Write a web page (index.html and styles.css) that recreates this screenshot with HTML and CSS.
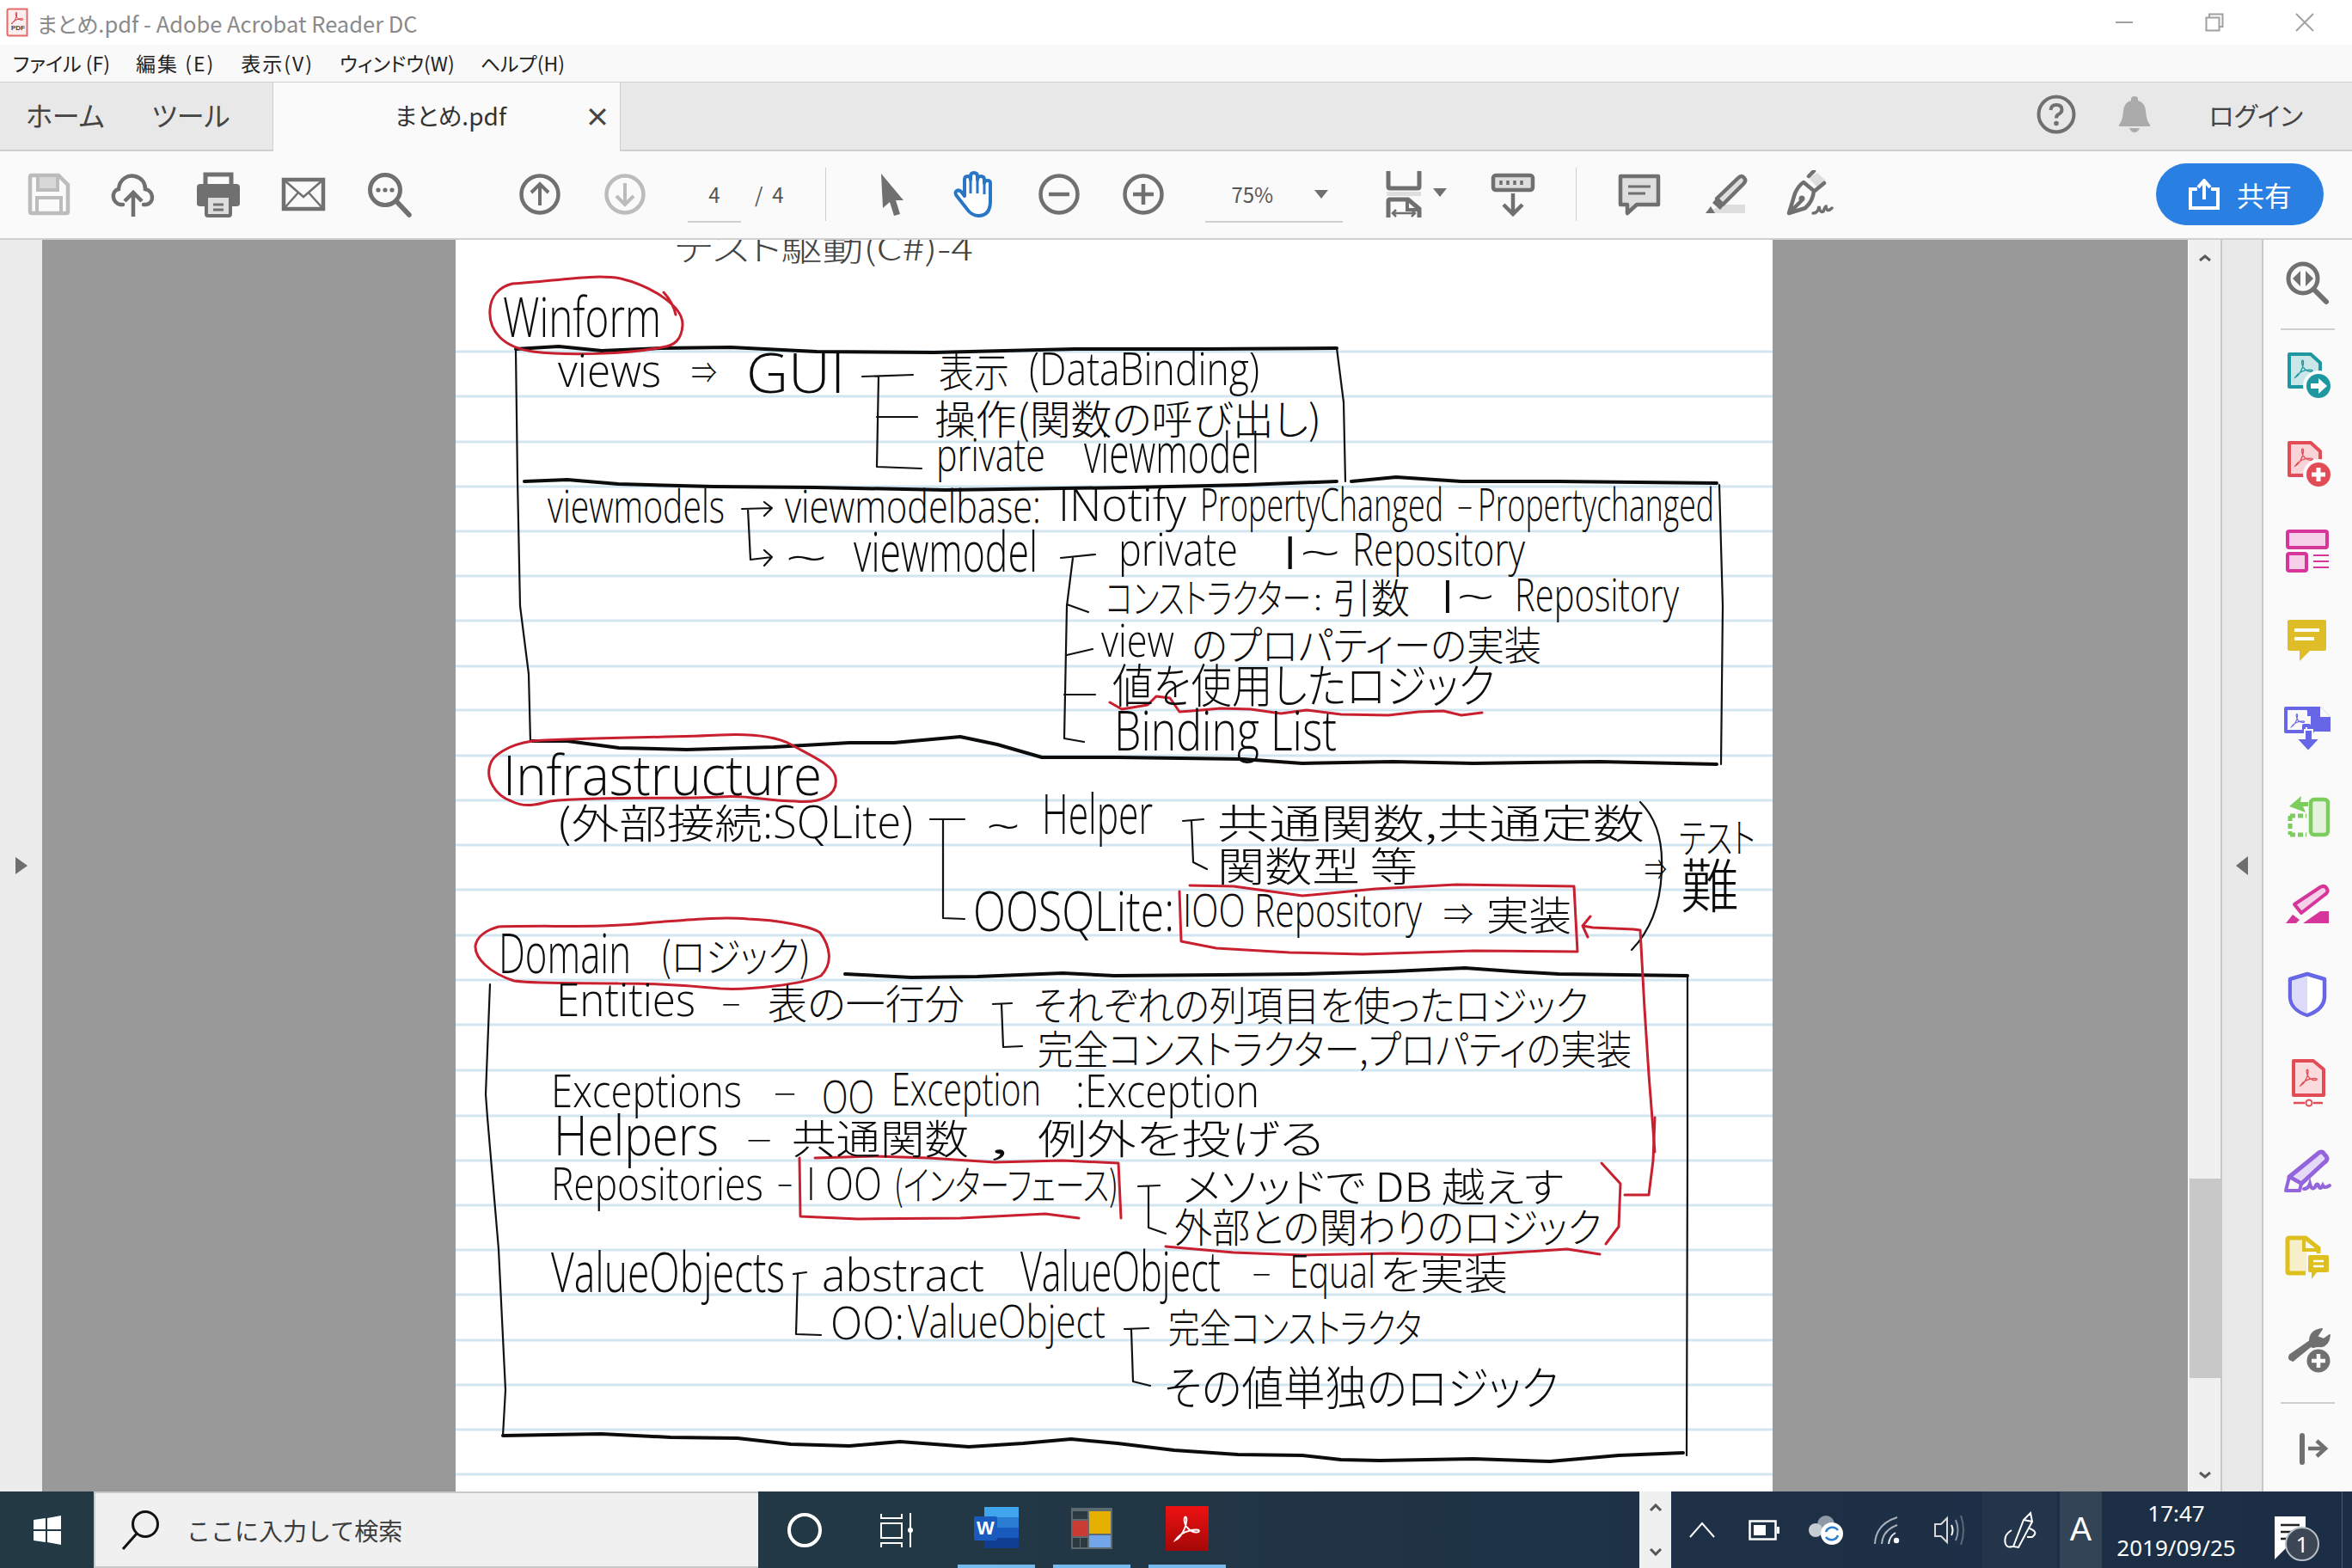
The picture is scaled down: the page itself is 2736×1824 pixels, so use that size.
FILE: index.html
```html
<!DOCTYPE html>
<html lang="ja">
<head>
<meta charset="utf-8">
<title>まとめ.pdf - Adobe Acrobat Reader DC</title>
<link rel="stylesheet" href="styles.css">
</head>
<body>
<svg class="defs" width="0" height="0">
  <symbol id="swirl" viewBox="0 0 24 24"><path d="M3 21C7 19 11 12 11.5 6C11.8 2 9.5 2 9.8 6C10.2 11 15 15 19 15C22 15 22 13 19 13C14 13 7 15 3 21Z" fill="none" stroke="currentColor" stroke-width="1.3"/></symbol>
</svg>
<div class="app">

  <div class="titlebar">
    <svg class="title-logo" width="26" height="34" viewBox="0 0 26 34"><path d="M1.5 3.5Q1.5 1.5 3.5 1.5H24.5V32.5H3.5Q1.5 32.5 1.5 30.5Z" fill="#fbeeee" stroke="#e46a6a" stroke-width="2"/><use href="#swirl" x="4" y="3" width="18" height="18" color="#d8232a"/></svg>
    <span class="title-logo-pdf">PDF</span>
    <span class="title-text">まとめ.pdf - Adobe Acrobat Reader DC</span>
    <div class="win-controls">
      <svg class="win-btn" width="22" height="22" viewBox="0 0 22 22"><path d="M1 11H21" stroke="#a0a0a0" stroke-width="2"/></svg>
      <svg class="win-btn" width="22" height="22" viewBox="0 0 22 22"><path d="M5 5V1.5H20.5V16H16.5M1.5 5.5H16.5V20.5H1.5Z" fill="none" stroke="#a0a0a0" stroke-width="2"/></svg>
      <svg class="win-btn" width="22" height="22" viewBox="0 0 22 22"><path d="M1 1L21 21M21 1L1 21" stroke="#a0a0a0" stroke-width="1.8"/></svg>
    </div>
  </div>

  <div class="menubar">
    <span>ファイル (F)</span><span class="menu-wide">編集 (E)</span><span class="menu-wide">表示(V)</span><span>ウィンドウ(W)</span><span>ヘルプ(H)</span>
  </div>

  <div class="tabbar">
    <div class="tab-home"><span>ホーム</span><span>ツール</span></div>
    <div class="tab-doc"><span class="tab-name">まとめ.pdf</span><span class="tab-close">×</span></div>
    <div class="tab-right">
      <svg width="46" height="46" viewBox="0 0 46 46"><circle cx="23" cy="23" r="20.5" fill="none" stroke="#707070" stroke-width="4"/><path d="M16.5 18Q17 12 23 12Q29.5 12 29.5 17.5Q29.5 21 25.5 23Q23 24.5 23 27.5" fill="none" stroke="#707070" stroke-width="4"/><circle cx="23" cy="33.5" r="2.8" fill="#707070"/></svg>
      <svg class="bell" width="38" height="44" viewBox="0 0 38 44"><path d="M15 4Q15 1 19 1Q23 1 23 4V6Q31 8 32 18Q33 30 37 34V36H1V34Q5 30 6 18Q7 8 15 6Z" fill="#ababab"/><path d="M13 38H25Q23 43 19 43Q15 43 13 38Z" fill="#ababab"/></svg>
      <span class="login">ログイン</span>
    </div>
  </div>

  <div class="toolbar">
    <div class="tool-group tg-file">
      <svg class="ico" width="56" height="56" viewBox="0 0 56 56"><path d="M7 8Q7 6 9 6H40L51 17V48Q51 50 49 50H9Q7 50 7 48Z" fill="none" stroke="#bcbcbc" stroke-width="4.5"/><path d="M16 8V23H39V8" fill="#d8d8d8" stroke="#bcbcbc" stroke-width="4"/><path d="M15 49V32H43V49" fill="none" stroke="#bcbcbc" stroke-width="4"/></svg>
      <svg class="ico" width="56" height="56" viewBox="0 0 56 56"><path d="M16 40H13C3 38 2 24 11 22C12 10 22 5 30 7C38 9 42 15 42 22C52 24 53 38 43 40H40" fill="none" stroke="#707070" stroke-width="4.5" stroke-linecap="round"/><path d="M28 54V27M18 36L28 26L38 36" fill="none" stroke="#707070" stroke-width="4.5"/></svg>
      <svg class="ico ico-print" width="56" height="56" viewBox="0 0 56 56"><path d="M13 16V5H43V16" fill="none" stroke="#707070" stroke-width="5"/><path d="M7 16H49Q53 16 53 20V39Q53 42 49 42H44V29H12V42H7Q3 42 3 39V20Q3 16 7 16Z" fill="#707070"/><path d="M14 30H42V51Q42 53 40 53H16Q14 53 14 51Z" fill="#dedede" stroke="#707070" stroke-width="4"/><path d="M22 40H34M22 46H34" stroke="#707070" stroke-width="3"/></svg>
      <svg class="ico" width="56" height="56" viewBox="0 0 56 56"><path d="M5 11H51V45H5Z" fill="none" stroke="#707070" stroke-width="4.5"/><path d="M5 11L28 31L51 11M5 45L22 26M51 45L34 26" fill="none" stroke="#707070" stroke-width="2.5"/></svg>
      <svg class="ico" width="56" height="56" viewBox="0 0 56 56"><circle cx="24" cy="23" r="17.5" fill="none" stroke="#707070" stroke-width="5"/><circle cx="16" cy="23" r="2.6" fill="#707070"/><circle cx="24" cy="23" r="2.6" fill="#707070"/><circle cx="32" cy="23" r="2.6" fill="#707070"/><path d="M37 36L52 52" stroke="#707070" stroke-width="5.5" stroke-linecap="round"/></svg>
    </div>
    <div class="tool-group tg-nav">
      <svg class="ico" width="56" height="56" viewBox="0 0 56 56"><circle cx="28" cy="28" r="21.5" fill="none" stroke="#707070" stroke-width="4.5"/><path d="M28 41V17M18 26L28 16L38 26" fill="none" stroke="#707070" stroke-width="4"/></svg>
      <svg class="ico" width="56" height="56" viewBox="0 0 56 56"><circle cx="28" cy="28" r="21.5" fill="none" stroke="#bcbcbc" stroke-width="4.5"/><path d="M28 15V39M18 30L28 40L38 30" fill="none" stroke="#bcbcbc" stroke-width="4"/></svg>
    </div>
    <div class="page-field"><span>4</span></div>
    <span class="page-total">/&nbsp;&nbsp;4</span>
    <div class="tool-sep tool-sep-a"></div>
    <div class="tool-group tg-mode">
      <svg class="ico" width="56" height="56" viewBox="0 0 56 56"><path d="M17 4L43 35L34 35L39 51L32 53L27 37L19 44Z" fill="#707070"/></svg>
      <svg class="ico" width="56" height="56" viewBox="0 0 56 56"><path d="M18 44L7 30Q4 26 7 24Q10 22 13 26L16 30V11Q16 7 19.5 7Q23 7 23 11V7Q23 3 27 3Q31 3 31 7V11Q31 7 35 7Q39 7 39 11V15Q39 12 42.5 12Q46 12 46 15V36Q46 53 32 53Q24 53 18 44Z" fill="#fff" stroke="#2a76c6" stroke-width="4" stroke-linejoin="round"/><path d="M23 10V27M31 8V27M39 13V28" stroke="#2a76c6" stroke-width="3"/></svg>
      <svg class="ico" width="56" height="56" viewBox="0 0 56 56"><circle cx="28" cy="28" r="21.5" fill="none" stroke="#707070" stroke-width="4.5"/><path d="M16 28H40" stroke="#707070" stroke-width="4.5"/></svg>
      <svg class="ico" width="56" height="56" viewBox="0 0 56 56"><circle cx="28" cy="28" r="21.5" fill="none" stroke="#707070" stroke-width="4.5"/><path d="M16 28H40M28 16V40" stroke="#707070" stroke-width="4.5"/></svg>
    </div>
    <div class="zoom-field"><span>75%</span><i class="caret"></i></div>
    <svg class="ico ico-fit" width="56" height="56" viewBox="0 0 56 56"><path d="M10 1V19Q10 21 12 21H44Q46 21 46 19V1" fill="none" stroke="#707070" stroke-width="5"/><path d="M8 25H48V30H8Z" fill="#dedede"/><path d="M10 55V36Q10 34 12 34H33L46 45V55" fill="none" stroke="#707070" stroke-width="5"/><path d="M32 34V46H46" fill="none" stroke="#707070" stroke-width="4"/><path d="M15 50H41M19 46L15 50L19 54M37 46L41 50L37 54" fill="none" stroke="#707070" stroke-width="2.5"/></svg>
    <i class="caret caret-fit"></i>
    <svg class="ico ico-read" width="56" height="56" viewBox="0 0 56 56"><rect x="5" y="6" width="46" height="17" rx="3" fill="#dedede" stroke="#707070" stroke-width="4.5"/><path d="M14 12V17M22 12V17M30 12V17M38 12V17" stroke="#707070" stroke-width="3.5"/><path d="M28 27V51M17 40L28 51L39 40" fill="none" stroke="#707070" stroke-width="4.5"/></svg>
    <div class="tool-sep tool-sep-b"></div>
    <div class="tool-group tg-note">
      <svg class="ico" width="56" height="56" viewBox="0 0 56 56"><path d="M6 7H50V40H25L14 50V40H6Z" fill="#dedede" stroke="#707070" stroke-width="4.5" stroke-linejoin="round"/><path d="M15 19H41M15 27H35" stroke="#707070" stroke-width="3"/></svg>
      <svg class="ico" width="56" height="56" viewBox="0 0 56 56"><path d="M8 50H52V40H24Z" fill="#dedede"/><path d="M19 33L44 9Q48 5 51 9Q54 12 50 16L26 40Z" fill="#dedede" stroke="#707070" stroke-width="4.5" stroke-linejoin="round"/><path d="M20 31L28 40L23 46L14 38Z" fill="#707070"/><path d="M6 50L12 42L17 50Z" fill="#707070"/></svg>
      <svg class="ico" width="56" height="56" viewBox="0 0 56 56"><path d="M27 9L36 19L47 12L37 3Z" fill="#dedede"/><path d="M27 7L33 1M21 14L33 24Q32 36 23 44L4 50L11 27Q15 18 21 14ZM34 24L45 15M5 49L18 36" fill="none" stroke="#707070" stroke-width="4.5" stroke-linecap="round" stroke-linejoin="round"/><circle cx="19" cy="33" r="3.5" fill="#707070"/><path d="M32 50Q38 50 39 42Q40 50 44 48Q46 42 47 42Q48 50 54 44" fill="none" stroke="#707070" stroke-width="3.5" stroke-linecap="round"/></svg>
    </div>
    <div class="share-btn">
      <svg width="36" height="36" viewBox="0 0 36 36"><path d="M10 12H2V34H34V12H26" fill="none" stroke="#fff" stroke-width="4"/><path d="M18 24V4M11 10L18 2L25 10" fill="none" stroke="#fff" stroke-width="4"/></svg>
      <span>共有</span>
    </div>
  </div>

  <div class="workspace">
    <div class="left-strip"><i class="tri-right"></i></div>
    <div class="doc-area">
      <svg class="page" width="1532" height="1456" viewBox="530 279 1532 1456">
        <g class="rules">
          <path d="M530 409H2062M530 461H2062M530 514H2062M530 566H2062M530 618H2062M530 670H2062M530 722H2062M530 775H2062M530 826H2062M530 879H2062M530 931H2062M530 983H2062M530 1035H2062M530 1088H2062M530 1140H2062M530 1192H2062M530 1245H2062M530 1298H2062M530 1350H2062M530 1402H2062M530 1454H2062M530 1506H2062M530 1559H2062M530 1611H2062M530 1663H2062M530 1715H2062"/>
        </g>

        <text class="pg-title" x="785" y="303" textLength="347" lengthAdjust="spacingAndGlyphs">テスト駆動(C#)-4</text>

        <g class="thick">
          <path d="M600 406L650 403L700 408L769 405L850 404L950 409L1087 410L1250 406L1400 406L1555 405"/>
          <path d="M610 560L660 558L719 563L830 566L948 567L1100 570L1316 567L1450 564L1555 560"/>
          <path d="M1572 560L1624 555L1700 560L1813 560L1997 562"/>
          <path d="M619 862L660 862L720 870L799 872L900 869L988 864L1040 864L1117 857L1160 866L1212 881L1300 881L1445 883L1515 888L1620 886L1714 888L1860 886L1997 889"/>
          <path d="M983 1133L1060 1137L1137 1136L1236 1132L1296 1135L1420 1134L1515 1133L1620 1130L1704 1126L1760 1130L1813 1133L1963 1135"/>
          <path d="M585 1670L640 1669L699 1668L780 1672L858 1673L920 1680L988 1682L1047 1677L1127 1683L1190 1679L1246 1674L1300 1679L1366 1687L1440 1692L1515 1693L1560 1698L1605 1699L1714 1697L1803 1700L1883 1693L1958 1690"/>
        </g>
        <g class="thin">
          <path d="M600 408L602 558L605 705L615 784L617 863"/>
          <path d="M1555 405L1563 468L1565 560"/>
          <path d="M2000 564L2004 705L2002 889"/>
          <path d="M570 1145L565 1273L567 1300L580 1453L588 1617L585 1670"/>
          <path d="M1963 1135V1340L1962 1693"/>
          <path d="M1003 438L1062 436M1022 438L1020 543L1072 545M1020 485L1067 485"/>
          <path d="M863 592L898 591M889 584L898 591L889 600M870 592L873 651L898 648M889 640L898 648L889 658"/>
          <path d="M1234 649L1274 645M1248 649L1241 705L1238 859L1261 863M1241 703L1266 712M1241 762L1271 755M1238 808L1274 808"/>
          <path d="M1082 953L1122 953M1097 953V1068L1122 1069"/>
          <path d="M1376 955L1400 953M1386 955L1388 1003L1404 1011"/>
          <path d="M1908 933Q1935 960 1933 1010Q1932 1070 1898 1105"/>
          <path d="M1155 1168L1177 1167M1165 1168L1167 1218L1189 1217"/>
          <path d="M1324 1380L1349 1379M1336 1380V1428L1356 1435"/>
          <path d="M923 1482L938 1480M928 1482L926 1552L955 1553"/>
          <path d="M1308 1546L1336 1545M1316 1547L1318 1607L1338 1612"/>
        </g>

        <g class="red">
          <path d="M596 330C640 328 690 318 722 324C755 332 795 355 794 378C793 395 785 402 770 404C730 412 660 414 620 409C585 404 568 385 570 360C571 345 580 334 596 330M772 340Q783 352 786 366"/>
          <path d="M620 862C680 858 780 858 838 855C880 853 905 858 920 866C945 880 970 890 972 905C975 925 955 935 925 932C890 932 870 924 838 927C780 930 700 926 640 932C625 936 610 940 595 932C575 925 565 905 570 890C572 880 590 866 620 862"/>
          <path d="M580 1078C640 1076 700 1080 760 1073C800 1070 840 1066 870 1069C905 1070 945 1078 954 1085C965 1100 970 1120 955 1135C935 1145 870 1152 838 1150C800 1146 750 1144 719 1144C680 1143 630 1145 598 1141C570 1132 552 1115 553 1100C555 1090 565 1082 580 1078"/>
          <path d="M1291 817L1305 825L1335 820L1345 810L1361 812L1372 828L1386 827L1420 824L1455 825L1490 830L1520 826L1560 831L1615 832L1650 828L1679 827L1700 832L1724 829"/>
          <path d="M1384 1030L1435 1031L1515 1042L1600 1034L1694 1029L1831 1031L1835 1107L1715 1106L1585 1110L1500 1108L1415 1103L1374 1095L1372 1037"/>
          <path d="M1925 1300L1923 1350L1918 1390L1890 1390"/>
          <path d="M1841 1077L1853 1079L1900 1081L1908 1082L1913 1173L1918 1250L1925 1340M1841 1077L1850 1066M1841 1077L1847 1090"/>
          <path d="M1863 1353L1885 1377L1883 1427L1868 1447"/>
          <path d="M948 1347L1017 1345L1080 1347L1157 1352L1236 1350L1301 1353L1304 1417M930 1347L931 1415L998 1418L1117 1417L1216 1412L1255 1417"/>
          <path d="M1356 1450L1435 1457L1515 1460L1620 1458L1714 1460L1823 1453L1861 1459"/>
        </g>

        <text class="hw-l" x="585" y="392" textLength="184" lengthAdjust="spacingAndGlyphs">Winform</text>
        <text class="hw-m" x="649" y="450" textLength="120" lengthAdjust="spacingAndGlyphs">views</text>
        <text class="hj-s" x="804" y="446" textLength="30" lengthAdjust="spacingAndGlyphs">⇒</text>
        <text class="hw-l" x="868" y="457" textLength="115" lengthAdjust="spacingAndGlyphs">GUI</text>
        <text class="hj-m" x="1092" y="450" textLength="82" lengthAdjust="spacingAndGlyphs">表示</text>
        <text class="hw-m" x="1197" y="448" textLength="268" lengthAdjust="spacingAndGlyphs">(DataBinding)</text>
        <text class="hj-m" x="1087" y="505" textLength="450" lengthAdjust="spacingAndGlyphs">操作(関数の呼び出し)</text>
        <text class="hw-m" x="1089" y="548" textLength="127" lengthAdjust="spacingAndGlyphs">private</text>
        <text class="hw-l" x="1261" y="550" textLength="204" lengthAdjust="spacingAndGlyphs">viewmodel</text>

        <text class="hw-m" x="637" y="608" textLength="206" lengthAdjust="spacingAndGlyphs">viewmodels</text>
        <text class="hw-m" x="913" y="608" textLength="298" lengthAdjust="spacingAndGlyphs">viewmodelbase:</text>
        <text class="hw-m" x="1231" y="606" textLength="149" lengthAdjust="spacingAndGlyphs">INotify</text>
        <text class="hw-m" x="1396" y="606" textLength="283" lengthAdjust="spacingAndGlyphs">PropertyChanged</text>
        <text class="hj-s" x="1694" y="600" textLength="20" lengthAdjust="spacingAndGlyphs">-</text>
        <text class="hw-m" x="1719" y="606" textLength="275" lengthAdjust="spacingAndGlyphs">Propertychanged</text>
        <text class="hw-m" x="913" y="668" textLength="50" lengthAdjust="spacingAndGlyphs">~</text>
        <text class="hw-l" x="993" y="665" textLength="214" lengthAdjust="spacingAndGlyphs">viewmodel</text>
        <text class="hw-m" x="1301" y="658" textLength="139" lengthAdjust="spacingAndGlyphs">private</text>
        <text class="hw-m" x="1490" y="662" textLength="70" lengthAdjust="spacingAndGlyphs">I~</text>
        <text class="hw-m" x="1573" y="658" textLength="201" lengthAdjust="spacingAndGlyphs">Repository</text>
        <text class="hj-m" x="1286" y="713" textLength="239" lengthAdjust="spacingAndGlyphs">コンストラクター</text>
        <text class="hj-s" x="1528" y="710" textLength="10" lengthAdjust="spacingAndGlyphs">:</text>
        <text class="hj-m" x="1550" y="713" textLength="90" lengthAdjust="spacingAndGlyphs">引数</text>
        <text class="hw-m" x="1674" y="713" textLength="65" lengthAdjust="spacingAndGlyphs">I~</text>
        <text class="hw-m" x="1762" y="711" textLength="191" lengthAdjust="spacingAndGlyphs">Repository</text>
        <text class="hw-m" x="1281" y="764" textLength="85" lengthAdjust="spacingAndGlyphs">view</text>
        <text class="hj-m" x="1386" y="768" textLength="407" lengthAdjust="spacingAndGlyphs">のプロパティーの実装</text>
        <text class="hj-l" x="1294" y="818" textLength="445" lengthAdjust="spacingAndGlyphs">値を使用したロジック</text>
        <text class="hw-l" x="1296" y="873" textLength="259" lengthAdjust="spacingAndGlyphs">Binding List</text>

        <text class="hw-l" x="585" y="925" textLength="371" lengthAdjust="spacingAndGlyphs">Infrastructure</text>
        <text class="hj-m" x="647" y="975" textLength="240" lengthAdjust="spacingAndGlyphs">(外部接続</text>
        <text class="hw-m" x="887" y="975" textLength="175" lengthAdjust="spacingAndGlyphs">:SQLite)</text>
        <text class="hw-m" x="1147" y="980" textLength="40" lengthAdjust="spacingAndGlyphs">~</text>
        <text class="hw-l" x="1212" y="970" textLength="129" lengthAdjust="spacingAndGlyphs">Helper</text>
        <text class="hj-m" x="1416" y="975" textLength="497" lengthAdjust="spacingAndGlyphs">共通関数,共通定数</text>
        <text class="hj-m" x="1416" y="1025" textLength="233" lengthAdjust="spacingAndGlyphs">関数型 等</text>
        <text class="hw-l" x="1132" y="1083" textLength="234" lengthAdjust="spacingAndGlyphs">OOSQLite:</text>
        <text class="hw-m" x="1376" y="1078" textLength="278" lengthAdjust="spacingAndGlyphs">IOO Repository</text>
        <text class="hj-s" x="1679" y="1076" textLength="35" lengthAdjust="spacingAndGlyphs">⇒</text>
        <text class="hj-m" x="1729" y="1082" textLength="99" lengthAdjust="spacingAndGlyphs">実装</text>
        <text class="hj-m" x="1953" y="992" textLength="89" lengthAdjust="spacingAndGlyphs">テスト</text>
        <text class="hj-s" x="1913" y="1024" textLength="26" lengthAdjust="spacingAndGlyphs">⇒</text>
        <text class="hj-t" x="1955" y="1056" textLength="68" lengthAdjust="spacingAndGlyphs">難</text>

        <text class="hw-l" x="580" y="1132" textLength="154" lengthAdjust="spacingAndGlyphs">Domain</text>
        <text class="hj-m" x="768" y="1130" textLength="175" lengthAdjust="spacingAndGlyphs">(ロジック)</text>
        <text class="hw-m" x="647" y="1182" textLength="162" lengthAdjust="spacingAndGlyphs">Entities</text>
        <text class="hj-s" x="838" y="1178" textLength="25" lengthAdjust="spacingAndGlyphs">-</text>
        <text class="hj-m" x="893" y="1185" textLength="229" lengthAdjust="spacingAndGlyphs">表の一行分</text>
        <text class="hj-m" x="1202" y="1187" textLength="646" lengthAdjust="spacingAndGlyphs">それぞれの列項目を使ったロジック</text>
        <text class="hj-m" x="1207" y="1238" textLength="691" lengthAdjust="spacingAndGlyphs">完全コンストラクター,プロパティの実装</text>
        <text class="hw-m" x="641" y="1288" textLength="222" lengthAdjust="spacingAndGlyphs">Exceptions</text>
        <text class="hj-s" x="898" y="1282" textLength="30" lengthAdjust="spacingAndGlyphs">-</text>
        <text class="hw-m" x="956" y="1295" textLength="61" lengthAdjust="spacingAndGlyphs">OO</text>
        <text class="hw-m" x="1037" y="1286" textLength="174" lengthAdjust="spacingAndGlyphs">Exception</text>
        <text class="hw-m" x="1251" y="1288" textLength="214" lengthAdjust="spacingAndGlyphs">:Exception</text>
        <text class="hw-l" x="644" y="1344" textLength="192" lengthAdjust="spacingAndGlyphs">Helpers</text>
        <text class="hj-s" x="866" y="1336" textLength="34" lengthAdjust="spacingAndGlyphs">-</text>
        <text class="hj-m" x="921" y="1342" textLength="206" lengthAdjust="spacingAndGlyphs">共通関数</text>
        <text class="hj-m" x="1150" y="1342" textLength="24" lengthAdjust="spacingAndGlyphs">,</text>
        <text class="hj-m" x="1207" y="1342" textLength="333" lengthAdjust="spacingAndGlyphs">例外を投げる</text>
        <text class="hw-m" x="641" y="1396" textLength="247" lengthAdjust="spacingAndGlyphs">Repositories</text>
        <text class="hj-s" x="903" y="1388" textLength="20" lengthAdjust="spacingAndGlyphs">-</text>
        <text class="hw-m" x="938" y="1396" textLength="88" lengthAdjust="spacingAndGlyphs">I OO</text>
        <text class="hj-m" x="1040" y="1396" textLength="261" lengthAdjust="spacingAndGlyphs">(インターフェース)</text>
        <text class="hj-m" x="1376" y="1398" textLength="443" lengthAdjust="spacingAndGlyphs">メソッドで DB 越えす</text>
        <text class="hj-m" x="1366" y="1445" textLength="497" lengthAdjust="spacingAndGlyphs">外部との関わりのロジック</text>
        <text class="hw-l" x="641" y="1503" textLength="272" lengthAdjust="spacingAndGlyphs">ValueObjects</text>
        <text class="hw-m" x="956" y="1502" textLength="189" lengthAdjust="spacingAndGlyphs">abstract</text>
        <text class="hw-l" x="1187" y="1502" textLength="233" lengthAdjust="spacingAndGlyphs">ValueObject</text>
        <text class="hj-s" x="1455" y="1492" textLength="25" lengthAdjust="spacingAndGlyphs">-</text>
        <text class="hw-m" x="1500" y="1498" textLength="100" lengthAdjust="spacingAndGlyphs">Equal</text>
        <text class="hj-m" x="1605" y="1500" textLength="149" lengthAdjust="spacingAndGlyphs">を実装</text>
        <text class="hw-m" x="966" y="1558" textLength="86" lengthAdjust="spacingAndGlyphs">OO:</text>
        <text class="hw-m" x="1056" y="1556" textLength="230" lengthAdjust="spacingAndGlyphs">ValueObject</text>
        <text class="hj-m" x="1359" y="1562" textLength="295" lengthAdjust="spacingAndGlyphs">完全コンストラクタ</text>
        <text class="hj-l" x="1354" y="1635" textLength="459" lengthAdjust="spacingAndGlyphs">その値単独のロジック</text>
      </svg>
    </div>
    <div class="scroll-strip">
      <svg class="chev" width="16" height="10" viewBox="0 0 16 10"><path d="M2 8L8 3L14 8" fill="none" stroke="#5a5a5a" stroke-width="3"/></svg>
      <div class="scroll-thumb"></div>
      <svg class="chev chev-down" width="16" height="10" viewBox="0 0 16 10"><path d="M2 2L8 7L14 2" fill="none" stroke="#5a5a5a" stroke-width="3"/></svg>
    </div>
    <div class="panel-handle"><i class="tri-left"></i></div>
    <div class="tools">
      <div class="tool-cell"><svg width="60" height="60" viewBox="0 0 60 60"><circle cx="24" cy="23" r="17" fill="none" stroke="#707070" stroke-width="5"/><path d="M21 14V32L12 23ZM27 14V32L36 23Z" fill="#707070"/><path d="M37 36L51 50" stroke="#707070" stroke-width="6" stroke-linecap="round"/></svg></div>
      <div class="tools-sep"></div>
      <div class="tool-cell"><svg width="60" height="60" viewBox="0 0 60 60"><path d="M8 6H33L44 16V44H8Z" fill="#c9e7e8" stroke="#1f97a0" stroke-width="4" stroke-linejoin="round"/><use href="#swirl" x="12" y="10" width="26" height="26" color="#1f97a0"/><circle cx="42" cy="43" r="18" fill="#fafafa"/><circle cx="42" cy="43" r="14" fill="#1f97a0"/><path d="M33 40H42V34L52 43L42 52V46H33Z" fill="#fff"/></svg></div>
      <div class="tool-cell"><svg width="60" height="60" viewBox="0 0 60 60"><path d="M8 6H33L44 16V44H8Z" fill="#f8d3d7" stroke="#e24c56" stroke-width="4" stroke-linejoin="round"/><use href="#swirl" x="12" y="10" width="26" height="26" color="#e24c56"/><circle cx="42" cy="43" r="18" fill="#fafafa"/><circle cx="42" cy="43" r="14" fill="#e24c56"/><path d="M42 35V51M34 43H50" stroke="#fff" stroke-width="5"/></svg></div>
      <div class="tool-cell"><svg width="60" height="60" viewBox="0 0 60 60"><rect x="6" y="6" width="46" height="19" rx="2" fill="#f6cfe8" stroke="#d6359a" stroke-width="4"/><rect x="6" y="32" width="22" height="20" rx="2" fill="#f6cfe8" stroke="#d6359a" stroke-width="4"/><path d="M36 34H54M36 41H54M36 48H54" stroke="#d6359a" stroke-width="2.2"/></svg></div>
      <div class="tool-cell"><svg width="60" height="60" viewBox="0 0 60 60"><path d="M9 6H49Q51 6 51 8V40Q51 42 49 42H32L20 54V42H9Q6 42 6 40V8Q6 6 9 6Z" fill="#dfbd28"/><path d="M14 18H43M14 28H37" stroke="#fff" stroke-width="4"/></svg></div>
      <div class="tool-cell"><svg width="60" height="60" viewBox="0 0 60 60"><path d="M4 6H29L35 12V33H31V26H25V33H4Z" fill="#fafafa" stroke="#6666e6" stroke-width="4" stroke-linejoin="round"/><use href="#swirl" x="8" y="10" width="20" height="20" color="#6666e6"/><path d="M29 4H44L56 16V33H37V15H29Z" fill="#6666e6"/><path d="M44 4V16H56" fill="#fafafa"/><path d="M26 31H35V41H44L30 56L16 41H26Z" fill="#6666e6" stroke="#fafafa" stroke-width="2"/></svg></div>
      <div class="tool-cell"><svg width="60" height="60" viewBox="0 0 60 60"><rect x="33" y="9" width="20" height="41" rx="4" fill="#e5f2dc" stroke="#7dcc5e" stroke-width="4.5"/><path d="M9 28H28M9 50H28M9 28V50" fill="none" stroke="#7dcc5e" stroke-width="5" stroke-dasharray="6 3"/><path d="M8 17L22 5L21 12H30V17H24L27 24Z" fill="#7dcc5e"/></svg></div>
      <div class="tool-cell"><svg width="60" height="60" viewBox="0 0 60 60"><path d="M14 28L44 8Q49 5 52 10Q54 14 49 17L22 38Z" fill="#f6cfe8" stroke="#d6359a" stroke-width="4" stroke-linejoin="round"/><path d="M4 50L12 40L20 46L16 50Z" fill="#d6359a"/><path d="M24 50L44 36H54V50Z" fill="#d6359a"/></svg></div>
      <div class="tool-cell"><svg width="60" height="60" viewBox="0 0 60 60"><path d="M29 6L49 12V32Q49 47 29 54Q9 47 9 32V12Z" fill="#fff" stroke="#6666e6" stroke-width="4.5" stroke-linejoin="round"/><path d="M29 9V52Q11 46 11 32V14Z" fill="#dcdcf8"/></svg></div>
      <div class="tool-cell"><svg width="60" height="60" viewBox="0 0 60 60"><path d="M13 4H36L48 14V44H13Z" fill="#fadadc" stroke="#e24c56" stroke-width="4" stroke-linejoin="round"/><use href="#swirl" x="18" y="11" width="25" height="25" color="#e24c56"/><path d="M13 53H26M36 53H47" stroke="#e24c56" stroke-width="2.5"/><circle cx="31" cy="53" r="3.5" fill="none" stroke="#e24c56" stroke-width="2"/></svg></div>
      <div class="tool-cell"><svg width="60" height="60" viewBox="0 0 60 60"><path d="M8 36L40 10Q46 4 49 10L51 12Q54 16 48 20L22 44Z" fill="#e4d9f6" stroke="#9464dc" stroke-width="5" stroke-linejoin="round"/><path d="M4 52L8 36L22 44L20 52Z" fill="#fafafa" stroke="#9464dc" stroke-width="4" stroke-linejoin="round"/><path d="M25 50Q30 50 32 44Q34 52 38 48Q40 42 42 46Q44 52 47 46Q49 50 55 46" fill="none" stroke="#9464dc" stroke-width="4" stroke-linecap="round"/></svg></div>
      <div class="tool-cell"><svg width="60" height="60" viewBox="0 0 60 60"><path d="M28 4H8Q6 4 6 6V44H28" fill="#f6efca"/><path d="M27 45H8Q6 45 6 43V6Q6 4 8 4H27L42 16V22" fill="none" stroke="#dfbf1e" stroke-width="5"/><path d="M25 5V18H42" fill="none" stroke="#dfbf1e" stroke-width="4"/><path d="M32 24H52Q54 24 54 26V42Q54 44 52 44H40L34 52V44H32Q30 44 30 42V26Q30 24 32 24Z" fill="#dfbf1e"/><path d="M36 31H48M36 37H48" stroke="#fff" stroke-width="2.5"/></svg></div>
      <div class="tool-cell"><svg width="60" height="60" viewBox="0 0 60 60"><path d="M9 37L32 21Q32 9 46 7L40 16L48 19L55 14Q54 26 44 28Q38 30 33 27L12 44Z" fill="#707070" stroke="#707070" stroke-width="2" stroke-linejoin="round"/><circle cx="11" cy="40" r="4" fill="#707070"/><circle cx="42" cy="44" r="16" fill="#fafafa"/><circle cx="42" cy="44" r="13.5" fill="#707070"/><path d="M42 36V52M34 44H50" stroke="#fff" stroke-width="4.5"/></svg></div>
      <div class="tools-sep tools-sep-low"></div>
      <div class="tool-cell"><svg width="60" height="60" viewBox="0 0 60 60"><path d="M23 15V46" stroke="#707070" stroke-width="6" stroke-linecap="round"/><path d="M30 30H50M40 21L50 30L40 39" fill="none" stroke="#707070" stroke-width="4.5"/></svg></div>
    </div>
  </div>

  <div class="taskbar">
    <div class="start">
      <svg width="34" height="34" viewBox="0 0 34 34"><path d="M1 5L15 3V16H1ZM17 3L33 0V16H17ZM1 18H15V31L1 29ZM17 18H33V34L17 31Z" fill="#fff"/></svg>
    </div>
    <div class="search-box">
      <svg width="50" height="50" viewBox="0 0 50 50"><circle cx="30" cy="18" r="14.5" fill="none" stroke="#111" stroke-width="3"/><path d="M20 29L4 47" stroke="#111" stroke-width="3"/></svg>
      <span>ここに入力して検索</span>
    </div>
    <div class="task-cell">
      <svg width="42" height="42" viewBox="0 0 42 42"><circle cx="21" cy="21" r="18" fill="none" stroke="#fff" stroke-width="4"/></svg>
    </div>
    <div class="task-cell">
      <svg width="44" height="44" viewBox="0 0 44 44"><path d="M4 3V8H28V3M4 14H28V31H4ZM4 42V37H28V42M38 2V42" fill="none" stroke="#fff" stroke-width="2"/><circle cx="38" cy="22" r="3" fill="#fff"/></svg>
    </div>
    <div class="task-app task-app-first">
      <svg width="52" height="50" viewBox="0 0 52 50"><path d="M12 0H52V12H12Z" fill="#41a5ee"/><path d="M12 12H52V24H12Z" fill="#2b7cd3"/><path d="M12 24H52V36H12Z" fill="#185abd"/><path d="M12 36H52V48H12Z" fill="#103f91"/><rect x="0" y="11" width="27" height="28" rx="2" fill="#185abd"/><text class="word-w" x="13.5" y="32" text-anchor="middle">W</text></svg>
    </div>
    <div class="task-app">
      <svg width="48" height="48" viewBox="0 0 48 48"><rect x="0" y="0" width="48" height="48" fill="#5d6a70"/><rect x="21" y="4" width="25" height="26" fill="#e6b000"/><rect x="21" y="32" width="25" height="14" fill="#72a5ea"/><rect x="2" y="15" width="17" height="18" fill="#c93b33"/><rect x="2" y="4" width="17" height="9" fill="#2b3940"/><rect x="2" y="35" width="8" height="11" fill="#2b3940"/><rect x="11" y="35" width="8" height="11" fill="#2b3940"/></svg>
    </div>
    <div class="task-app">
      <svg width="50" height="52" viewBox="0 0 50 52"><defs><linearGradient id="redg" x1="0" y1="0" x2="0" y2="1"><stop offset="0" stop-color="#ee1111"/><stop offset="1" stop-color="#a50808"/></linearGradient></defs><rect width="50" height="52" fill="url(#redg)"/><use href="#swirl" x="7" y="8" width="36" height="36" color="#fff"/></svg>
    </div>
    <div class="tray-scroll">
      <svg width="16" height="10" viewBox="0 0 16 10"><path d="M2 8L8 2L14 8" fill="none" stroke="#555" stroke-width="3"/></svg>
      <svg width="16" height="10" viewBox="0 0 16 10"><path d="M2 2L8 8L14 2" fill="none" stroke="#555" stroke-width="3"/></svg>
    </div>
    <div class="tray-cell"><svg width="30" height="20" viewBox="0 0 30 20"><path d="M1 18L15 2L29 18" fill="none" stroke="#fff" stroke-width="2"/></svg></div>
    <div class="tray-cell"><svg width="36" height="24" viewBox="0 0 36 24"><rect x="1.5" y="1.5" width="30" height="21" fill="none" stroke="#fff" stroke-width="2.5"/><rect x="6" y="6" width="14" height="12" fill="#fff"/><rect x="33" y="8" width="3" height="8" fill="#fff"/></svg></div>
    <div class="tray-cell"><svg width="40" height="36" viewBox="0 0 40 36"><circle cx="20" cy="11" r="10" fill="#8d9aa6"/><circle cx="8" cy="18" r="8" fill="#c5ccd2"/><circle cx="27" cy="22" r="13" fill="#fff"/><path d="M20 20A8 8 0 0 1 34 18M34 24A8 8 0 0 1 20 26" fill="none" stroke="#2a7fd0" stroke-width="2.5"/></svg></div>
    <div class="tray-cell"><svg width="34" height="34" viewBox="0 0 34 34"><path d="M2 33Q3 10 28 2M10 33Q11 17 28 11" fill="none" stroke="#aab2bb" stroke-width="2"/><path d="M18 33Q19 24 26 20" fill="none" stroke="#e8e8e8" stroke-width="2"/><circle cx="27" cy="29" r="3.2" fill="#fff"/></svg></div>
    <div class="tray-cell"><svg width="38" height="36" viewBox="0 0 38 36"><path d="M2 11H9L16 4V32L9 25H2Z" fill="none" stroke="#d8d8d8" stroke-width="2"/><path d="M21 12Q24 18 21 24" fill="none" stroke="#fff" stroke-width="2"/><path d="M26 6Q31 18 26 30" fill="none" stroke="#8a96a2" stroke-width="2"/><path d="M32 1Q38 18 32 35" fill="none" stroke="#5b6978" stroke-width="2"/></svg></div>
    <div class="tray-pen"><svg width="44" height="44" viewBox="0 0 44 44"><path d="M14 41L26 10L34 2L36 12L20 42ZM26 10L36 12M12 22Q2 28 5 38Q7 43 13 41M33 20Q44 24 36 30L30 30" fill="none" stroke="#fff" stroke-width="2"/></svg></div>
    <div class="tray-ime">A</div>
    <div class="clock"><span>17:47</span><span>2019/09/25</span></div>
    <div class="notify">
      <svg width="36" height="54" viewBox="0 0 36 54"><path d="M0 0H36V34H16L0 50Z" fill="#fff" transform="translate(0 2)"/><path d="M7 12H29M7 20H29M7 28H22" stroke="#222" stroke-width="2.5"/></svg>
      <span class="notify-badge">1</span>
    </div>
  </div>

</div>
</body>
</html>
```

FILE: styles.css
```css
html, body {
  margin: 0;
  padding: 0;
  background: #fff;
}
.defs {
  position: absolute;
}
.app {
  width: 2736px;
  height: 1824px;
  display: flex;
  flex-direction: column;
  overflow: hidden;
  font-family: "Noto Sans CJK JP", "Noto Sans", sans-serif;
  font-feature-settings: "palt";
}

/* window title */
.titlebar {
  height: 52px;
  flex: none;
  display: flex;
  align-items: center;
  padding-left: 7px;
  background: #fff;
  position: relative;
}
.title-logo-pdf {
  position: absolute;
  left: 13px;
  top: 28px;
  font: bold 8px "Liberation Sans", sans-serif;
  color: #444;
  line-height: 10px;
}
.title-text {
  margin-left: 10px;
  font-size: 25.5px;
  color: #8a8a8a;
  white-space: nowrap;
}
.win-controls {
  margin-left: auto;
  display: flex;
  gap: 83px;
  padding-right: 44px;
}

/* menu */
.menubar {
  height: 41px;
  flex: none;
  display: flex;
  align-items: center;
  gap: 30px;
  padding: 0 0 2px 15px;
  background: #f9f9f9;
  border-bottom: 2px solid #d0d0d0;
  font-size: 23px;
  color: #222;
}
.menu-wide {
  letter-spacing: 2px;
}

/* tabs */
.tabbar {
  height: 78px;
  flex: none;
  display: flex;
  background: #e8e8e8;
  border-bottom: 2px solid #cfcfcf;
  margin-top: -1px;
}
.tab-home {
  width: 318px;
  box-sizing: border-box;
  border-right: 1px solid #cfcfcf;
  display: flex;
  align-items: center;
  gap: 55px;
  padding: 0 0 4px 30px;
  font-size: 32px;
  color: #444;
}
.tab-doc {
  width: 404px;
  height: 80px;
  box-sizing: border-box;
  padding-bottom: 5px;
  background: #fafafa;
  border-right: 1px solid #cfcfcf;
  display: flex;
  align-items: center;
  font-size: 28px;
  color: #333;
}
.tab-name {
  margin-left: 141px;
}
.tab-close {
  margin-left: 91px;
  font-size: 30px;
  font-weight: bold;
  color: #444;
}
.tab-right {
  margin-left: auto;
  display: flex;
  align-items: center;
  padding: 0 57px 4px 0;
}
.bell {
  margin-left: 49px;
}
.login {
  margin-left: 68px;
  font-size: 30px;
  color: #444;
}

/* toolbar */
.toolbar {
  height: 103px;
  flex: none;
  display: flex;
  align-items: center;
  padding-bottom: 2px;
  box-sizing: border-box;
  background: #fafafa;
  border-bottom: 2px solid #d0d0d0;
}
.tool-group {
  display: flex;
  align-items: center;
  gap: 43px;
}
.ico {
  flex: none;
}
.tg-file {
  margin-left: 28px;
}
.tg-nav {
  margin-left: 120px;
}
.page-field {
  width: 62px;
  height: 64px;
  margin: 2px 0 0 45px;
  box-sizing: border-box;
  border-bottom: 2px solid #cfcfcf;
  display: flex;
  align-items: center;
  justify-content: center;
  font-size: 24px;
  color: #555;
}
.page-total {
  margin-left: 16px;
  font-size: 24px;
  color: #555;
  white-space: nowrap;
}
.tool-sep {
  width: 1px;
  height: 62px;
  background: #cfcfcf;
}
.tool-sep-a {
  margin-left: 49px;
}
.tg-mode {
  margin-left: 47px;
  gap: 42px;
}
.zoom-field {
  width: 160px;
  height: 64px;
  margin: 2px 0 0 44px;
  box-sizing: border-box;
  border-bottom: 2px solid #cfcfcf;
  display: flex;
  align-items: center;
  padding-left: 30px;
  font-size: 24px;
  color: #555;
}
.caret {
  display: block;
  width: 0;
  height: 0;
  border-left: 8px solid transparent;
  border-right: 8px solid transparent;
  border-top: 10px solid #707070;
}
.zoom-field .caret {
  margin-left: 48px;
}
.ico-fit {
  margin-left: 43px;
}
.caret-fit {
  margin: -4px 0 0 6px;
}
.ico-read {
  margin-left: 49px;
}
.tool-sep-b {
  margin-left: 45px;
}
.tg-note {
  margin-left: 45px;
  gap: 43px;
}
.share-btn {
  margin-left: auto;
  margin-right: 33px;
  width: 195px;
  height: 72px;
  box-sizing: border-box;
  border-radius: 36px;
  background: #2a7fe2;
  display: flex;
  align-items: center;
  padding-left: 38px;
  gap: 20px;
  color: #fff;
  font-size: 32px;
}

/* main area */
.workspace {
  flex: 1;
  min-height: 0;
  display: flex;
  background: #999;
}
.left-strip {
  width: 49px;
  flex: none;
  background: #ececec;
  display: flex;
  align-items: center;
  justify-content: center;
}
.tri-right {
  width: 0;
  height: 0;
  border-top: 10px solid transparent;
  border-bottom: 10px solid transparent;
  border-left: 14px solid #6e6e6e;
}
.tri-left {
  width: 0;
  height: 0;
  border-top: 11px solid transparent;
  border-bottom: 11px solid transparent;
  border-right: 14px solid #6e6e6e;
}
.doc-area {
  flex: 1;
  min-width: 0;
  padding-left: 481px;
  overflow: hidden;
}
.page {
  display: block;
  background: #fff;
}
.rules path {
  stroke: #d2e6f1;
  stroke-width: 3;
  fill: none;
}
.thick path, .thin path, .red path {
  fill: none;
  stroke-linecap: round;
  stroke-linejoin: round;
}
.thick path {
  stroke: #0c0c0c;
  stroke-width: 4;
}
.thin path {
  stroke: #111;
  stroke-width: 2.2;
}
.red path {
  stroke: #c8202e;
  stroke-width: 3;
}
.pg-title {
  font-size: 38px;
  font-weight: 300;
  fill: #444;
}
.hw-m, .hw-l {
  font-family: "Open Sans", "Noto Sans", sans-serif;
  font-weight: 300;
  fill: #0c0c0c;
}
.hj-s, .hj-m, .hj-l, .hj-t {
  font-weight: 300;
  fill: #0c0c0c;
}
.hw-m {
  font-size: 54px;
}
.hw-l {
  font-size: 64px;
}
.hj-s {
  font-size: 34px;
}
.hj-m {
  font-size: 47px;
}
.hj-l {
  font-size: 54px;
}
.hj-t {
  font-size: 68px;
}
.scroll-strip {
  width: 40px;
  flex: none;
  box-sizing: border-box;
  background: #f0f0f0;
  border-right: 2px solid #c8c8c8;
  border-left: 1px solid #fff;
  display: flex;
  flex-direction: column;
  align-items: center;
  padding-top: 16px;
}
.scroll-thumb {
  width: 36px;
  height: 232px;
  margin-top: auto;
  background: #c8c8c8;
}
.chev-down {
  margin: 108px 0 14px;
}
.panel-handle {
  width: 48px;
  flex: none;
  box-sizing: border-box;
  background: #e9e9e9;
  border-right: 2px solid #c8c8c8;
  display: flex;
  align-items: center;
  justify-content: center;
}
.tools {
  width: 103px;
  flex: none;
  background: #fafafa;
  display: flex;
  flex-direction: column;
  align-items: center;
}
.tool-cell {
  width: 100%;
  height: 103px;
  flex: none;
  display: flex;
  align-items: center;
  justify-content: center;
}
.tools-sep {
  width: 63px;
  height: 2px;
  flex: none;
  background: #cfcfcf;
}
.tools-sep-low {
  margin-top: 11px;
}

/* taskbar */
.taskbar {
  height: 89px;
  flex: none;
  display: flex;
  align-items: stretch;
  padding-right: 11px;
  background: linear-gradient(to right, #233a45, #233845 40%, #1d3046 75%, #1c2e45);
  color: #fff;
}
.start {
  width: 109px;
  flex: none;
  display: flex;
  align-items: center;
  justify-content: center;
}
.search-box {
  width: 773px;
  flex: none;
  box-sizing: border-box;
  background: #f0f0f0;
  border-top: 2px solid #c8c8c8;
  border-left: 2px solid #c8c8c8;
  border-bottom: 2px solid #c8c8c8;
  display: flex;
  align-items: center;
  padding-left: 28px;
  font-size: 28px;
  color: #3c3c3c;
}
.search-box span {
  margin-left: 28px;
  font-feature-settings: normal;
}
.task-cell {
  width: 107px;
  flex: none;
  display: flex;
  align-items: center;
  justify-content: center;
}
.task-app {
  width: 90px;
  flex: none;
  margin-left: 21px;
  box-sizing: border-box;
  border-bottom: 4px solid #76b9ed;
  display: flex;
  align-items: center;
  justify-content: center;
}
.task-app-first {
  margin-left: 18px;
}
.word-w {
  font: bold 22px "Liberation Sans", sans-serif;
  fill: #fff;
}
.tray-scroll {
  width: 37px;
  flex: none;
  margin-left: auto;
  background: #f0f0f0;
  display: flex;
  flex-direction: column;
  align-items: center;
  justify-content: space-between;
  padding: 14px 0;
  box-sizing: border-box;
}
.tray-cell {
  width: 72px;
  flex: none;
  display: flex;
  align-items: center;
  justify-content: center;
}
.tray-pen {
  width: 87px;
  margin-left: 2px;
  flex: none;
  background: rgba(255, 255, 255, .03);
  display: flex;
  align-items: center;
  justify-content: center;
}
.tray-ime {
  width: 49px;
  margin-left: 3px;
  flex: none;
  background: #334456;
  display: flex;
  align-items: center;
  justify-content: center;
  font: 38px "Liberation Sans", sans-serif;
}
.clock {
  width: 175px;
  flex: none;
  display: flex;
  flex-direction: column;
  align-items: center;
  justify-content: center;
  gap: 6px;
  padding-right: 2px;
  box-sizing: border-box;
  font: 26px/34px "Noto Sans", sans-serif;
}
.notify {
  width: 105px;
  flex: none;
  box-sizing: border-box;
  padding: 27px 0 0 26px;
  border-right: 1px solid #4a5a6a;
  position: relative;
}
.notify-badge {
  position: absolute;
  left: 38px;
  top: 41px;
  width: 36px;
  height: 36px;
  border-radius: 50%;
  background: #3c4654;
  border: 2px solid #b8bec6;
  display: flex;
  align-items: center;
  justify-content: center;
  font: 26px "Noto Sans", sans-serif;
  color: #fff;
}
```
